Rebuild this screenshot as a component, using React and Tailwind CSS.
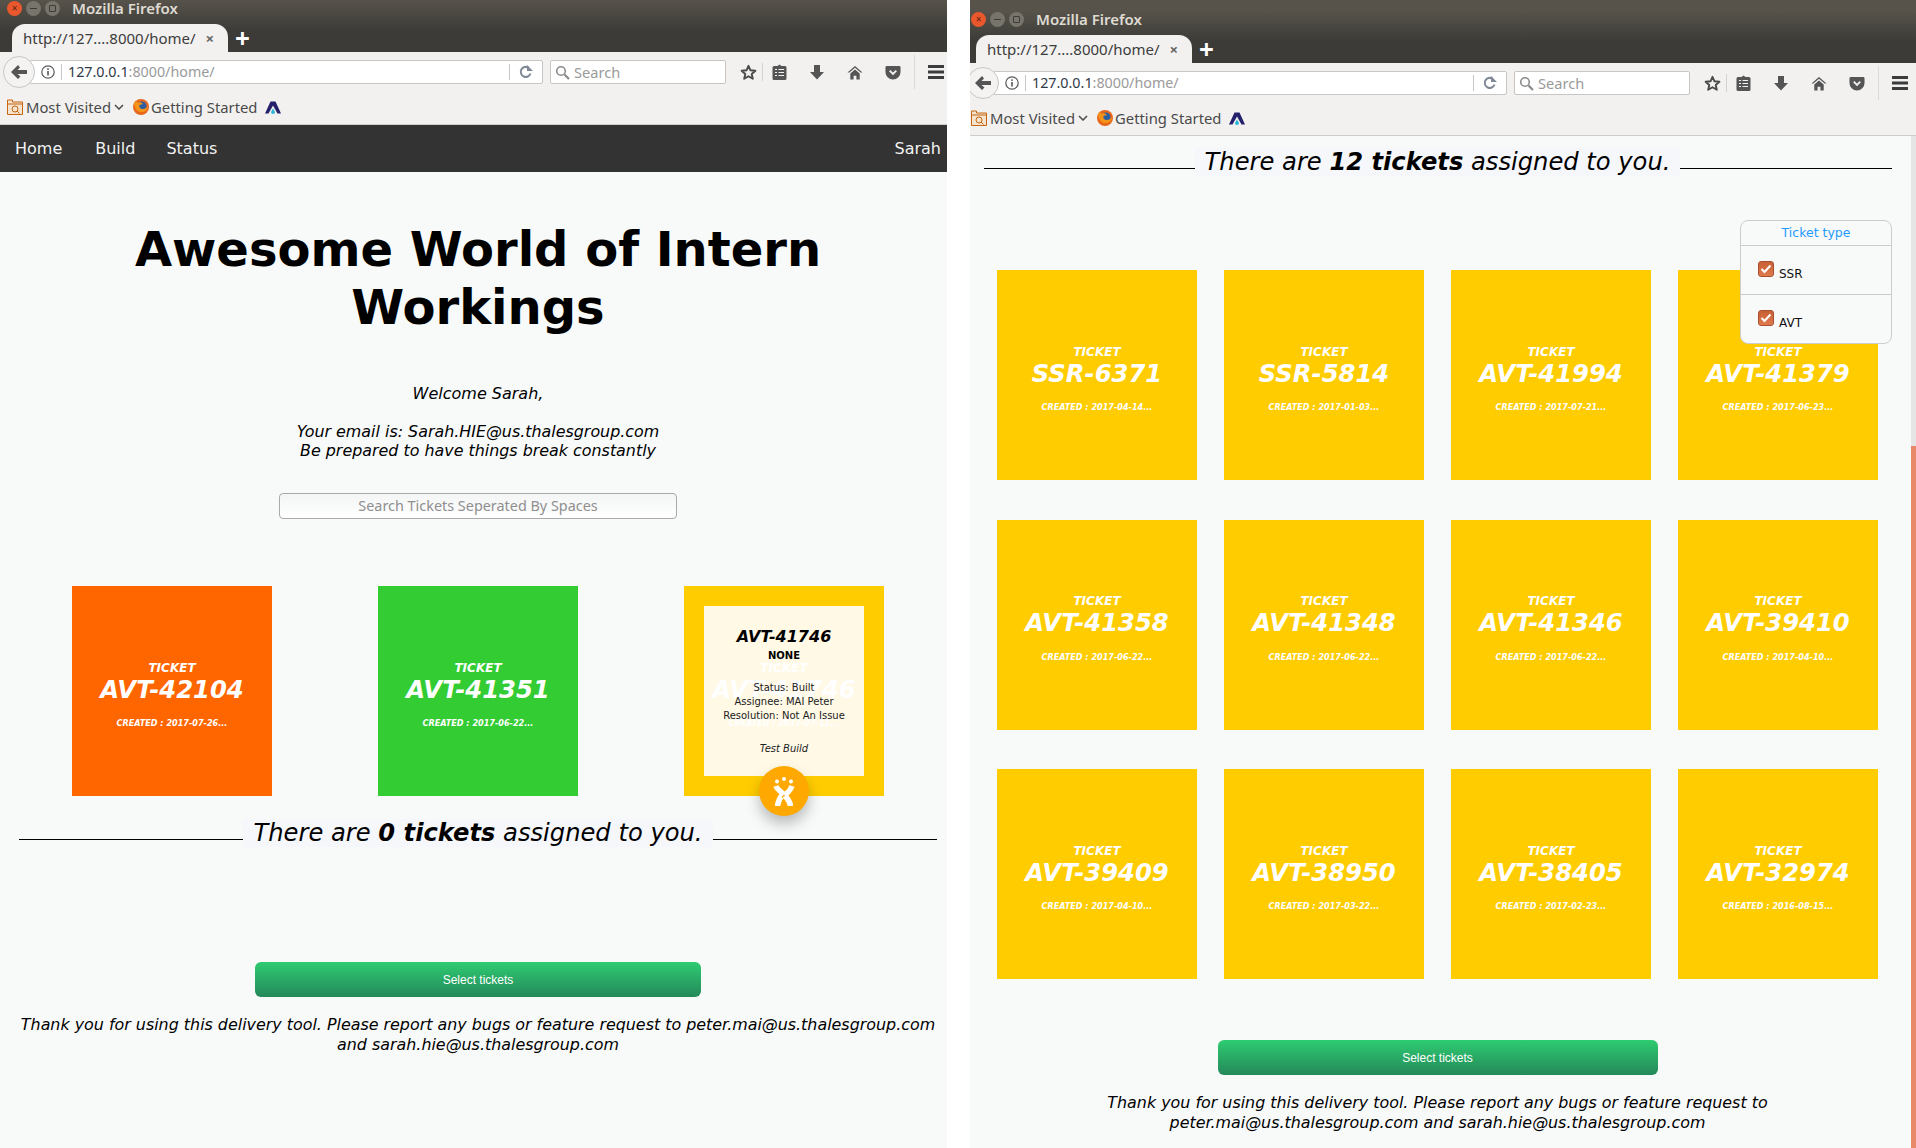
import React from 'react';

const DEJAVU = 'font-["DejaVu_Sans",sans-serif]';

const BackIcon = () => (
  <svg width="18" height="16" viewBox="0 0 18 16"><path d="M8 1 1 8l7 7 2.500-2.500L7.500 10H17V6H7.500L10 3.500z" fill="#555" /></svg>
);
const InfoIcon = () => (
  <svg width="14" height="14" viewBox="0 0 14 14" fill="none"><circle cx="7" cy="7" r="6.200" stroke="#5a5a5a" strokeWidth="1.200" /><rect x="6.200" y="6" width="1.600" height="4.500" fill="#5a5a5a" /><rect x="6.200" y="3.300" width="1.600" height="1.600" fill="#5a5a5a" /></svg>
);
const ReloadIcon = () => (
  <svg width="14" height="14" viewBox="0 0 14 14" fill="none"><path d="M11.500 8.500A5 5 0 1 1 9.500 2.700" stroke="#7f8a96" strokeWidth="2" /><path d="M8 0v6h6z" fill="#7f8a96" /></svg>
);
const SearchIcon = () => (
  <svg width="15" height="15" viewBox="0 0 15 15" fill="none"><circle cx="6" cy="6" r="4.300" stroke="#8a8a8a" strokeWidth="1.600" /><path d="m9.500 9.500 4.500 4.500" stroke="#8a8a8a" strokeWidth="2.200" /></svg>
);
const StarIcon = () => (
  <svg width="17" height="17" viewBox="0 0 17 17"><path d="m8.500 1.800 2 4.500 4.900.5-3.700 3.200 1.100 4.800-4.300-2.500-4.300 2.500 1.100-4.800L1.600 6.800l4.900-.5z" fill="none" stroke="#4a4a4a" strokeWidth="1.900" strokeLinejoin="round" /></svg>
);
const ClipboardIcon = () => (
  <svg width="15" height="16" viewBox="0 0 15 16"><path d="M5.500 2 7.500.5 9.500 2H13a1.500 1.500 0 0 1 1.500 1.500v11A1.500 1.500 0 0 1 13 16H2A1.500 1.500 0 0 1 .5 14.500v-11A1.500 1.500 0 0 1 2 2z" fill="#555" /><path d="M3 5.500h2m1.500 0H12M3 8.500h2m1.500 0H12M3 11.500h2m1.500 0H12" stroke="#f2f1f0" strokeWidth="1.200" /></svg>
);
const DownIcon = () => (
  <svg width="16" height="16" viewBox="0 0 16 16"><path d="M5 1h6v7h4l-7 7.500L1 8h4z" fill="#555" /></svg>
);
const HomeIcon = () => (
  <svg width="17" height="15" viewBox="0 0 17 15"><path d="M8.500.5 0.500 7.500h2L8.500 2.500l6 5h2z" fill="#555" /><path d="M3.500 8.500 8.500 4.300l5 4.200V15h-3.500v-4H7v4H3.500z" fill="#555" /></svg>
);
const PocketIcon = () => (
  <svg width="17" height="15" viewBox="0 0 17 15"><path d="M2 .5h13A1.500 1.500 0 0 1 16.500 2v5a8 8 0 0 1-16 0V2A1.500 1.500 0 0 1 2 .5z" fill="#555" /><path d="m5 5.500 3.500 3.500L12 5.500" fill="none" stroke="#f2f1f0" strokeWidth="2" /></svg>
);
const MenuIcon = () => (
  <svg width="16" height="14" viewBox="0 0 16 14"><path d="M0 0h16v3H0zM0 5.500h16v3H0zM0 11h16v3H0z" fill="#3c3c3c" /></svg>
);
const FolderIcon = () => (
  <svg width="16" height="16" viewBox="0 0 16 16" fill="none"><path d="M.5 1h5v2h10v12.500H.5z" fill="#f3e3cf" stroke="#c8650f" /><circle cx="8" cy="10" r="3" stroke="#c8650f" /><path d="m10 12 2.500 2.500" stroke="#c8650f" /><path d="M.5 5h15" stroke="#c8650f" /></svg>
);
const FirefoxIcon = () => (
  <svg width="16" height="16" viewBox="0 0 16 16"><circle cx="8" cy="8" r="8" fill="#e8661c" /><circle cx="9" cy="7" r="4.500" fill="#2f5f9e" /><path d="M1 5c1 5 4 9 9 8 3-.6 5-3 5-6-1 2-3 3-5 3-3 0-4-2-3.500-4L10 5C8 3 6 3 5 4 4 3 3 2.500 3 1.500 2 2.500 1 3.500 1 5z" fill="#f39419" /></svg>
);
const AppIcon = () => (
  <svg width="16" height="13" viewBox="0 0 16 13"><path d="M5.500.5h5L16 12.500h-3.500L8 4.500l-4.500 8H0z" fill="#25206b" /><path d="M8 7.500l2 3.500a2 2 0 0 1-4 0z" fill="#29b6d8" /></svg>
);
// white figure on the floating button
const JiraMark = () => (
  <svg width="22" height="29" viewBox="0 0 22 29" fill="none">
    <circle cx="11" cy="2" r="2" fill="#fff" />
    <circle cx="4" cy="4.500" r="2" fill="#fff" />
    <circle cx="18" cy="4.500" r="2" fill="#fff" />
    <path d="M3 9c2 6 13 9 14.500 20" stroke="#fff" strokeWidth="5.500" />
    <path d="M19 9c-2 6-5.500 7-8 10" stroke="#fff" strokeWidth="5.500" />
    <path d="M10 17C7.500 20 5 24 4.500 29" stroke="#fff" strokeWidth="5.500" />
    <path d="M8 10h6l-3 3.500z" fill="#ffa800" />
    <path d="M9 20.500c1-1 1.500-1.500 2.500-2.500" stroke="#ffa800" strokeWidth="1.200" />
  </svg>
);

const ToolSlot = ({ w, children }) => (
  <div className={`flex items-center justify-center ${w}`}>{children}</div>
);

const BrowserChrome = () => (
  <div className="w-[952px] font-['Noto_Sans',sans-serif]">
    {/* title bar and tab strip */}
    <div className="bg-gradient-to-b from-[#57534b] to-[#3c3b37] to-60%">
      <div className="flex h-[24px] items-center pb-[8px] pl-[7px]">
        <div className="flex h-[15px] w-[15px] items-center justify-center rounded-full bg-[#e9582c] text-[10px] leading-none text-[#5a2410]">×</div>
        <div className="ml-[4px] flex h-[15px] w-[15px] items-center justify-center rounded-full bg-[#77746c]"><div className="h-[1px] w-[7px] bg-[#3c3b37]" /></div>
        <div className="ml-[4px] flex h-[15px] w-[15px] items-center justify-center rounded-full bg-[#77746c]"><div className="h-[7px] w-[7px] rounded-[1px] border border-[#3c3b37]" /></div>
        <div className="ml-[12px] text-[15px] font-semibold leading-[16px] text-[#dfdbd2]">Mozilla Firefox</div>
      </div>
      <div className="flex h-[28px] items-end pl-[12px]">
        <div className="flex h-[28px] w-[216px] items-center rounded-t-[13px] bg-[#f2f1f0] pl-[11px] pr-[14px] text-[15px] text-[#3c3c3c]">
          <span className="flex-1 whitespace-nowrap">http://127....8000/home/</span>
          <span className="text-[15px] font-bold leading-none text-[#666]">×</span>
        </div>
        <div className="ml-[7px] flex h-[28px] items-center text-[26px] font-bold leading-none text-white">+</div>
      </div>
    </div>
    {/* toolbar */}
    <div className="flex h-[40px] items-center bg-[#f2f1f0] pl-[3px]">
      <div className="relative z-10 flex h-[32px] w-[32px] items-center justify-center rounded-full border border-[#c9c7c4] bg-[#f4f3f2]"><BackIcon /></div>
      <div className="-ml-[5px] flex h-[24px] w-[513px] items-center rounded-r-[2px] border border-[#c8c5c2] bg-white">
        <div className="ml-[10px] flex items-center"><InfoIcon /></div>
        <div className="ml-[6px] h-[16px] w-[1px] bg-[#c8c5c2]" />
        <div className="ml-[6px] flex-1 whitespace-nowrap text-[14.300px] leading-none text-[#2f3a46]">127.0.0.1<span className="text-[#9a9a9a]">:8000/home/</span></div>
        <div className="h-[16px] w-[1px] bg-[#c8c5c2]" />
        <div className="flex w-[32px] items-center justify-center"><ReloadIcon /></div>
      </div>
      <div className="ml-[7px] flex h-[24px] w-[176px] items-center rounded-[2px] border border-[#c8c5c2] bg-white pl-[4px]">
        <SearchIcon />
        <span className="ml-[4px] text-[14.600px] leading-none text-[#9a9a9a]">Search</span>
      </div>
      <ToolSlot w="ml-[13px] w-[18px]"><StarIcon /></ToolSlot>
      <div className="ml-[5px] h-[18px] w-[1px] bg-[#d4d2cf]" />
      <ToolSlot w="ml-[8px] w-[16px]"><ClipboardIcon /></ToolSlot>
      <ToolSlot w="ml-[22px] w-[16px]"><DownIcon /></ToolSlot>
      <ToolSlot w="ml-[22px] w-[16px]"><HomeIcon /></ToolSlot>
      <ToolSlot w="ml-[22px] w-[16px]"><PocketIcon /></ToolSlot>
      <div className="ml-[13px] h-[34px] w-[1px] bg-[#dcdad7]" />
      <ToolSlot w="ml-[13px] w-[16px]"><MenuIcon /></ToolSlot>
    </div>
    {/* bookmarks */}
    <div className="flex h-[33px] items-center border-b border-[#cfcdca] bg-[#f2f1f0] pb-[2px] pl-[7px] text-[14.800px] text-[#4a4a4a]">
      <FolderIcon />
      <span className="ml-[3px]">Most Visited</span>
      <svg className="ml-[3px]" width="10" height="6" viewBox="0 0 10 6" fill="none"><path d="m1 1 4 4 4-4" stroke="#4a4a4a" strokeWidth="1.500" /></svg>
      <div className="ml-[9px]"><FirefoxIcon /></div>
      <span className="ml-[2px]">Getting Started</span>
      <div className="ml-[8px]"><AppIcon /></div>
    </div>
  </div>
);

const TicketCard = ({ id, created, color = 'bg-[#ffcc00]', backdrop, children }) => (
  <div className={`relative flex h-[210px] w-[200px] flex-col items-center pt-[72.500px] text-white italic font-bold ${color}`}>
    {backdrop}
    <div className="relative text-[12px] leading-[18px]">TICKET</div>
    <div className="relative text-[24.300px] leading-[26px]">{id}</div>
    <div className="relative mt-[14.500px] text-[8.100px] leading-[12px]">CREATED : {created}...</div>
    {children}
  </div>
);

const AssignedHeading = ({ count, className }) => (
  <div className={`flex items-center ${className}`}>
    <div className="mt-[13px] h-[1px] flex-1 bg-black" />
    <div className="whitespace-nowrap bg-[#f5f7fa] px-[10px] text-[24.200px] leading-[28px] text-black italic">
      There are <b>{count} tickets</b> assigned to you.
    </div>
    <div className="mt-[13px] h-[1px] flex-1 bg-black" />
  </div>
);

const SelectButton = ({ className }) => (
  <div className={`flex h-[35px] items-center justify-center rounded-[6px] bg-gradient-to-b from-[#2ecc71] to-[#24895a] font-['Liberation_Sans',sans-serif] text-[12px] text-white ${className}`}>
    Select tickets
  </div>
);

const leftTickets = [
  { id: 'AVT-42104', created: '2017-07-26', color: 'bg-[#ff6600]' },
  { id: 'AVT-41351', created: '2017-06-22', color: 'bg-[#33cc33]' },
];

const rightTickets = [
  { id: 'SSR-6371', created: '2017-04-14' },
  { id: 'SSR-5814', created: '2017-01-03' },
  { id: 'AVT-41994', created: '2017-07-21' },
  { id: 'AVT-41379', created: '2017-06-23' },
  { id: 'AVT-41358', created: '2017-06-22' },
  { id: 'AVT-41348', created: '2017-06-22' },
  { id: 'AVT-41346', created: '2017-06-22' },
  { id: 'AVT-39410', created: '2017-04-10' },
  { id: 'AVT-39409', created: '2017-04-10' },
  { id: 'AVT-38950', created: '2017-03-22' },
  { id: 'AVT-38405', created: '2017-02-23' },
  { id: 'AVT-32974', created: '2016-08-15' },
];

const FilterOption = ({ label }) => (
  <div className="flex h-[49px] items-center border-t border-[#cccccc] pl-[17px] pt-[3px]">
    <div className="mb-[6px] flex h-[16px] w-[16px] items-center justify-center rounded-[3px] border border-[#a8502e] bg-gradient-to-b from-[#c85f36] to-[#e07a4e]">
      <svg width="12" height="10" viewBox="0 0 12 10" fill="none"><path d="m1.500 5 3 3 6-6.500" stroke="#fff" strokeWidth="2" /></svg>
    </div>
    <span className="ml-[5px] mt-[4px] text-[12px] text-[#111]">{label}</span>
  </div>
);

const LeftWindow = () => (
  <div className="flex w-[947px] flex-col overflow-hidden">
    <BrowserChrome />
    <div className={`flex h-[47px] items-center bg-[#333333] px-[15px] text-[16px] text-[#f2f2f2] ${DEJAVU}`}>
      <span>Home</span>
      <span className="ml-[33px]">Build</span>
      <span className="ml-[31px]">Status</span>
      <span className="ml-auto -mr-[9px]">Sarah</span>
    </div>
    <div className={`flex flex-1 flex-col items-center bg-[#f8fafa] pl-[9px] text-black ${DEJAVU}`}>
      <h1 className="mt-[48px] w-[760px] text-center text-[48px] font-bold leading-[58px]">Awesome World of Intern Workings</h1>
      <p className="mt-[48px] text-[16px] leading-[19px] italic">Welcome Sarah,</p>
      <p className="mt-[19px] text-center text-[15.900px] leading-[19px] italic">
        Your email is: Sarah.HIE@us.thalesgroup.com<br />Be prepared to have things break constantly
      </p>
      <div className="mt-[33px] flex h-[26px] w-[398px] items-center justify-center rounded-[4px] border border-[#a9a9a9] bg-gradient-to-b from-[#f4f5f5] to-white font-['Noto_Sans',sans-serif] text-[14.400px] text-[#8f8f8f]">
        Search Tickets Seperated By Spaces
      </div>
      <div className="mt-[67px] flex w-[812px] justify-between">
        {leftTickets.map((t) => <TicketCard key={t.id} {...t} />)}
        <TicketCard
          id="AVT-41746"
          created="2017-07-11"
          backdrop={<div className="absolute inset-[20px] bg-[#fff9e6]" />}
        >
          {/* hovered ticket details */}
          <div className="absolute inset-[20px] flex flex-col items-center pt-[20px] text-center text-black not-italic font-normal">
            <div className="text-[16px] font-bold leading-[22px] italic">AVT-41746</div>
            <div className="text-[10px] font-bold leading-[16px]">NONE</div>
            <div className="mt-[17px] text-[10px] leading-[14px] text-[#222]">Status: Built<br />Assignee: MAI Peter<br />Resolution: Not An Issue</div>
            <div className="mt-[19px] text-[10px] leading-[14px] italic text-[#222]">Test Build</div>
          </div>
          <div className="absolute left-[75px] top-[180px] flex h-[50px] w-[50px] items-center justify-center rounded-full bg-[#ffa800] shadow-[0_8px_14px_rgba(0,0,0,0.25)]"><JiraMark /></div>
        </TicketCard>
      </div>
      <AssignedHeading count={0} className="mt-[23px] w-[918px]" />
      <SelectButton className="mt-[115px] w-[446px]" />
      <p className="mt-[18px] w-[930px] text-center text-[15.900px] leading-[20px] italic">
        Thank you for using this delivery tool. Please report any bugs or feature request to peter.mai@us.thalesgroup.com and sarah.hie@us.thalesgroup.com
      </p>
    </div>
  </div>
);

const RightWindow = () => (
  <div className="flex flex-1 flex-col overflow-hidden">
    <div className="h-[11px] bg-[#57534b]" />
    <div className="-ml-[6px]"><BrowserChrome /></div>
    <div className="flex flex-1">
      <div className={`relative flex flex-1 flex-col items-center bg-[#f8fafa] pr-[6px] text-black ${DEJAVU}`}>
        <AssignedHeading count={12} className="mt-[12px] w-[908px]" />
        <div className="mt-[94px] grid grid-cols-4 gap-x-[27px] gap-y-[39.500px]">
          {rightTickets.map((t) => <TicketCard key={t.id} {...t} />)}
        </div>
        <div className="absolute right-[19px] top-[84px] w-[152px] rounded-[8px] border border-[#cccccc] bg-[#f8fafa]">
          <div className="flex h-[24px] items-center justify-center text-[12.500px] text-[#1e9bff]">Ticket type</div>
          <FilterOption label="SSR" />
          <FilterOption label="AVT" />
        </div>
        <SelectButton className="mt-[61px] w-[440px]" />
        <p className="mt-[18px] w-[700px] text-center text-[15.900px] leading-[20px] italic">
          Thank you for using this delivery tool. Please report any bugs or feature request to peter.mai@us.thalesgroup.com and sarah.hie@us.thalesgroup.com
        </p>
      </div>
      {/* page scrollbar */}
      <div className="flex w-[5px] flex-col bg-[#e5e5e5]">
        <div className="h-[310px]" />
        <div className="flex-1 bg-[#e8896a]" />
      </div>
    </div>
  </div>
);

export default function App() {
  return (
    <div className="flex h-[1148px] w-[1916px] gap-[23px] overflow-hidden bg-white">
      <LeftWindow />
      <RightWindow />
    </div>
  );
}
